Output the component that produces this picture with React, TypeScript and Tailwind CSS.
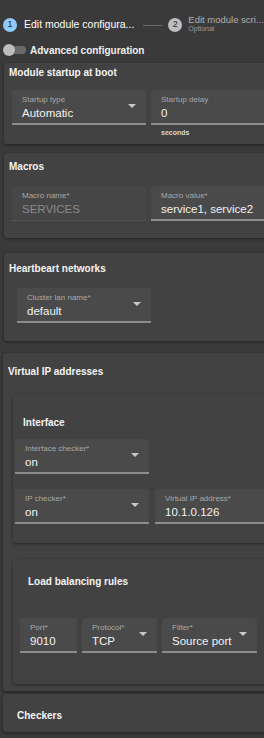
import { ReactNode } from "react";

const Field = ({ label, value, select, disabled, width, helper }: {
  label: string;
  value: string;
  select?: boolean;
  disabled?: boolean;
  width: string;
  helper?: string;
}) => {
  return (
    <div className={`flex flex-col shrink-0 ${width}`}>
      <div
        className={`relative h-[35px] rounded-t-[3px] px-[10px] pt-[5px] ${
          disabled ? "bg-[#464646] border-b border-dotted border-[#5c5c5c]" : "bg-[#4a4a4a] border-b-2 border-[#8c8c8c]"
        }`}
      >
        <div className="text-[8px] leading-[10px] text-[#a8a8a8] whitespace-nowrap">{label}</div>
        <div className={`text-[11.5px] leading-[15px] mt-[1px] whitespace-nowrap ${disabled ? "text-[#8a8a8a]" : "text-[#f2f2f2]"}`}>
          {value}
        </div>
        {select && (
          <div className="absolute right-[10px] top-[14px] w-0 h-0 border-l-[4px] border-r-[4px] border-t-[4px] border-l-transparent border-r-transparent border-t-[#c8c8c8]" />
        )}
      </div>
      {helper && <div className="text-[7px] leading-[8px] font-bold text-[#d8d8d8] pl-[10px] mt-[4px]">{helper}</div>}
    </div>
  );
};

const Card = ({ className, children }: { className: string; children: ReactNode }) => (
  <div className={`bg-[#424242] rounded-[3px] shadow-[0_1px_3px_rgba(0,0,0,0.45)] ${className}`}>{children}</div>
);

const Title = ({ children, className }: { children: ReactNode; className: string }) => (
  <div className={`text-[10px] leading-[12px] font-bold text-[#f4f4f4] whitespace-nowrap ${className}`}>{children}</div>
);

export default function App() {
  return (
    <div className="w-[264px] h-[738px] overflow-hidden bg-[#3a3a3a] text-white" style={{ fontFamily: '"Liberation Sans", Arial, sans-serif' }}>
      <div className="w-[400px]">
        {/* stepper */}
        <div className="flex items-center pt-[18px] pl-[3px] h-[32px]">
          <div className="w-[14px] h-[14px] rounded-full bg-[#90caf9] text-[#1f2a3a] text-[9px] flex items-center justify-center">1</div>
          <div className="ml-[7px] text-[10.5px] text-white whitespace-nowrap">Edit module configura...</div>
          <div className="ml-[9px] w-[19px] h-px bg-[#6a6a6a]" />
          <div className="ml-[6px] w-[14px] h-[14px] rounded-full bg-[#bdbdbd] text-[#2a2a2a] text-[9px] flex items-center justify-center">2</div>
          <div className="ml-[6px] flex flex-col -mt-[3px]">
            <div className="text-[9.5px] leading-[11px] text-[#b0b0b0] whitespace-nowrap">Edit module scri...</div>
            <div className="text-[7px] leading-[8px] text-[#9a9a9a]">Optional</div>
          </div>
        </div>
        {/* toggle */}
        <div className="flex items-center mt-[13px] pl-[4px] h-[10px]">
          <div className="relative w-[22px] h-[8px] rounded-full bg-[#6a6a6a]">
            <div className="absolute -left-[1px] -top-[2px] w-[12px] h-[12px] rounded-full bg-[#bdbdbd] shadow" />
          </div>
          <div className="ml-[4px] text-[10px] font-bold text-[#eeeeee]">Advanced configuration</div>
        </div>

        {/* module startup */}
        <Card className="ml-[4px] mt-[8px] pt-[4px] pb-[7px]">
          <Title className="pl-[5px]">Module startup at boot</Title>
          <div className="flex gap-[5px] pl-[8px] mt-[11px]">
            <Field label="Startup type" value="Automatic" select width="w-[134px]" />
            <Field label="Startup delay" value="0" width="w-[160px]" helper="seconds" />
          </div>
        </Card>

        {/* macros */}
        <Card className="ml-[4px] mt-[9px] pt-[8px] pb-[17px]">
          <Title className="pl-[5px]">Macros</Title>
          <div className="flex gap-[5px] pl-[8px] mt-[13px]">
            <Field label="Macro name*" value="SERVICES" disabled width="w-[134px]" />
            <Field label="Macro value*" value="service1, service2" width="w-[160px]" />
          </div>
        </Card>

        {/* heartbeat */}
        <Card className="ml-[4px] mt-[15px] pt-[10px] pb-[18px]">
          <Title className="pl-[5px]">Heartbeart networks</Title>
          <div className="pl-[13px] mt-[13px]">
            <Field label="Cluster lan name*" value="default" select width="w-[134px]" />
          </div>
        </Card>

        {/* virtual ip */}
        <Card className="ml-[3px] mt-[12px] pt-[13px] pb-[7px]">
          <Title className="pl-[5px]">Virtual IP addresses</Title>
          <Card className="ml-[10px] mt-[16px] pt-[23px] pb-[19px]">
            <Title className="pl-[10px]">Interface</Title>
            <div className="pl-[2px] mt-[10px]">
              <Field label="Interface checker*" value="on" select width="w-[134px]" />
            </div>
            <div className="flex gap-[6px] pl-[2px] mt-[15px]">
              <Field label="IP checker*" value="on" select width="w-[134px]" />
              <Field label="Virtual IP address*" value="10.1.0.126" width="w-[160px]" />
            </div>
          </Card>
          <Card className="ml-[10px] mt-[16px] pt-[17px] pb-[31px]">
            <Title className="pl-[15px]">Load balancing rules</Title>
            <div className="flex gap-[5px] pl-[7px] mt-[30px]">
              <Field label="Port*" value="9010" width="w-[57px]" />
              <Field label="Protocol*" value="TCP" select width="w-[75px]" />
              <Field label="Filter*" value="Source port" select width="w-[95px]" />
            </div>
          </Card>
        </Card>

        {/* checkers */}
        <Card className="ml-[3px] mt-[3px] h-[38px] pt-[16px]">
          <Title className="pl-[14px]">Checkers</Title>
        </Card>
      </div>
    </div>
  );
}
